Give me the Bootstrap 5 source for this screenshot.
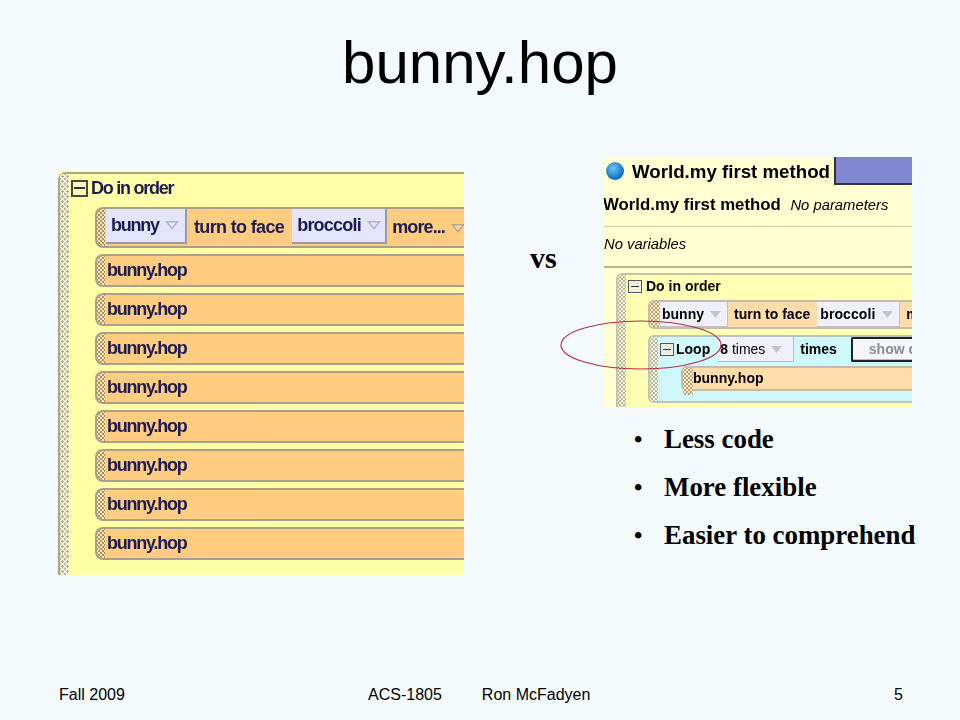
<!DOCTYPE html>
<html lang="en">
<head>
<meta charset="utf-8">
<title>bunny.hop</title>
<link rel="stylesheet" href="https://cdn.jsdelivr.net/npm/bootstrap@5.3.0/dist/css/bootstrap.min.css">
<style>
html,body{margin:0;height:720px;overflow:hidden;background:#f4fafb}
.slide{height:720px;font-family:"Liberation Sans",Arial,sans-serif;color:#000;position:relative}
.slide-title{font-size:60px;line-height:68px;padding-top:29px;height:157px;margin:0;font-weight:400;text-align:center}
.left-pic{width:407px;height:406px;margin:12px 0 0 57px;background:linear-gradient(#fffff0 0,#ffffa8 5px,#ffffa6 100%);overflow:hidden;flex:none;padding:3px 0 0 1px;filter:blur(.45px)}
.outer-block{height:420px;border:2px solid #a8a68c;border-right:0;border-radius:8px 0 0 8px;position:relative;padding:0 0 0 35px}
.dots{background-color:#fffbe0;background-image:radial-gradient(circle,#a8a688 1px,transparent 1.3px),radial-gradient(circle,#a8a688 1px,transparent 1.3px);background-size:5px 5px;background-position:0 0,2.5px 2.5px}
.outer-strip{position:absolute;left:0;top:0;bottom:0;width:9px}
.minus{width:17px;height:17px;border:2px solid #4a4a38;display:flex;align-items:center;justify-content:center;flex:none;background:#f8f8c0}
.minus::before{content:"";width:11px;height:2px;background:#333}
.l-head{height:28px;margin-left:-24px;color:#1c1c50;font-weight:700;font-size:18px;letter-spacing:-1.25px;gap:3px}
.hop-row{margin:0 0 6px 0;height:33px;width:400px;background:#ffcc80;border:2px solid #a8a08c;border-right:0;border-radius:8px 0 0 8px;display:flex;align-items:center;color:#1c1c50;font-weight:700;font-size:18px;letter-spacing:-1.25px;overflow:hidden}
.hop-row.tall{height:41px;margin-top:5px;margin-bottom:6px}
.row-strip{width:8px;align-self:stretch;flex:none;background-color:#ffe4b4;background-image:radial-gradient(circle,#a89060 .8px,transparent 1.1px),radial-gradient(circle,#a89060 .8px,transparent 1.1px);background-size:4px 4px;background-position:0 0,2px 2px;margin:0 2px 0 0}
.pick{background:#e4e4fc;height:35px;align-self:flex-start;display:flex;align-items:center;border-right:2px solid #9a9aa6;border-bottom:2px solid #9a9aa6;padding:0 5px}
.pick-bunny{margin-left:-1px;width:81px}
.pick-broc{margin-left:8px;width:95px;letter-spacing:-.8px}
.face-word{margin-left:7px;letter-spacing:-.65px;white-space:nowrap}
.more-word{margin-left:5px;letter-spacing:-.9px;white-space:nowrap}
.tri{margin-left:6px;flex:none}
.right-col{width:312px;flex:none;position:relative}
.vs-word{font:700 30px/1 "Liberation Serif","Times New Roman",serif;width:74px;margin:86px 0 0 66px;flex:none}
.right-pic{width:308px;height:250px;background:#ffffd2;overflow:hidden;filter:blur(.35px);font-weight:700;position:relative}
.win-head{height:28px}
.ball{width:18px;height:18px;border-radius:50%;background:radial-gradient(circle at 40% 35%,#6cc4f4,#0a6cc0 70%,#064a90);margin:0 8px 0 2px;flex:none}
.win-title{font-size:18.7px;line-height:27px;width:202px;flex:none;white-space:nowrap}
.win-fill{flex:1;background:#7f88d0;border-left:2px solid #333;border-bottom:2px solid #333}
.meth{height:42px;border-bottom:1px solid #c8c8a8;font-size:16.8px;white-space:nowrap;padding-top:7px;text-indent:-1px}
.meth i{font-weight:400;font-size:14.8px;margin-left:5px}
.vars{height:41px;border-bottom:2px solid #b4b48c;font-size:14.8px;font-weight:400;font-style:italic;padding-top:6px}
.r-block{height:160px;margin:5px 0 0 12px;background:#ffffb4;border:2px solid #c4c4a4;border-right:0;border-radius:6px 0 0 6px;position:relative;font-size:14px;padding:1px 0 0 10px;white-space:nowrap}
.r-strip{position:absolute;left:0;top:0;bottom:0;width:8px;background-size:4px 4px;background-position:0 0,2px 2px;background-color:#fffbe0;background-image:radial-gradient(circle,#b4b298 .8px,transparent 1.1px),radial-gradient(circle,#b4b298 .8px,transparent 1.1px)}
.r-minus{width:14px;height:13px;border:1px solid #556;display:flex;align-items:center;justify-content:center;flex:none;background:#eef0e0}
.r-minus::before{content:"";width:8px;height:1px;background:#333}
.r-row{height:29px;width:270px;margin:3px 0 0 20px;background:#ffdca8;border:2px solid #c4bea8;border-right:0;border-radius:6px 0 0 6px;display:flex;overflow:hidden;align-items:flex-start}
.r-grip{width:10px;height:27px;flex:none;background-color:#ffeccc;background-image:radial-gradient(circle,#bca070 .8px,transparent 1.1px),radial-gradient(circle,#bca070 .8px,transparent 1.1px);background-size:4px 4px;background-position:0 0,2px 2px}
.r-pick{background:#f0f0fb;height:25px;display:flex;align-items:center;padding:0 5px 0 2px;border-right:1px solid #c0c0c8;border-bottom:1px solid #c0c0c8;flex:none}
.r-pick-bunny{width:68px}
.r-pick-broc{width:83px;padding-left:3px;letter-spacing:.1px}
.r-pick-eight{width:76px}
.r-word{line-height:25px;padding:0 6px;flex:none}
.face-gap{padding-right:7px}
.loop-block{height:68px;width:270px;margin:6px 0 0 20px;background:#d0f8fb;border:2px solid #bcc4c0;border-right:0;border-radius:6px 0 0 6px;position:relative}
.loop-line{height:25px;margin-left:10px}
.loop-word{margin-left:2px}
.r-btn{width:90px;height:25px;margin-left:8px;flex:none;background:#f6f6fc;border:2px solid #222;border-right:0;color:#8a8a98;line-height:21px;padding-left:16px;border-radius:2px 0 0 2px;box-shadow:inset -1px -1px 0 #bbb}
.loop-hop{height:25px;margin:4px 0 0 31px;background:#ffdca8;border:2px solid #c4bea8;border-right:0;border-radius:6px 0 0 6px;display:flex;line-height:20px}
.bullets{font:700 26.9px/48px "Liberation Serif","Times New Roman",serif;margin:8px -10px 0 30px;padding:0;list-style:none;white-space:nowrap;letter-spacing:0}
.bullets li{display:flex}
.bullets li::before{content:"•";width:30px;flex:none;font-size:24px}
.oval{position:absolute;left:-44px;top:163px;overflow:visible}
.foot{position:absolute;left:59px;right:57px;bottom:15px;font-size:16px;line-height:20px}
.foot-mid{position:absolute;left:309px;white-space:nowrap;display:flex;gap:40px}
</style>
</head>
<body>
<div class="slide">
  <h1 class="slide-title">bunny.hop</h1>
  <div class="d-flex align-items-start">
    <div class="left-pic">
      <div class="outer-block">
        <div class="outer-strip dots"></div>
        <div class="l-head d-flex align-items-center"><span class="minus"></span><span>Do in order</span></div>
        <div class="hop-row tall"><span class="row-strip"></span><span class="pick pick-bunny">bunny<svg class="tri" width="14" height="9" viewBox="0 0 14 9"><polygon points="0,0 14,0 7,9" fill="#b4b4c4"/><polygon points="3,1.5 11,1.5 7,6.5" fill="#e4e4fc"/></svg></span><span class="face-word">turn to face</span><span class="pick pick-broc">broccoli<svg class="tri" width="14" height="9" viewBox="0 0 14 9"><polygon points="0,0 14,0 7,9" fill="#b4b4c4"/><polygon points="3,1.5 11,1.5 7,6.5" fill="#e4e4fc"/></svg></span><span class="more-word">more...<svg class="tri" width="14" height="9" viewBox="0 0 14 9"><polygon points="0,0 14,0 7,9" fill="#b0a890"/><polygon points="3,1.5 11,1.5 7,6.5" fill="#ffd9a0"/></svg></span></div>
        <div class="hop-row"><span class="row-strip"></span>bunny.hop</div>
        <div class="hop-row"><span class="row-strip"></span>bunny.hop</div>
        <div class="hop-row"><span class="row-strip"></span>bunny.hop</div>
        <div class="hop-row"><span class="row-strip"></span>bunny.hop</div>
        <div class="hop-row"><span class="row-strip"></span>bunny.hop</div>
        <div class="hop-row"><span class="row-strip"></span>bunny.hop</div>
        <div class="hop-row"><span class="row-strip"></span>bunny.hop</div>
        <div class="hop-row"><span class="row-strip"></span>bunny.hop</div>
      </div>
    </div>
    <div class="vs-word">vs</div>
    <div class="right-col">
      <div class="right-pic">
        <div class="win-head d-flex align-items-center"><span class="ball"></span><span class="win-title">World.my first method</span><span class="win-fill align-self-stretch"></span></div>
        <div class="meth">World.my first method <i>No parameters</i></div>
        <div class="vars">No variables</div>
        <div class="r-block">
          <div class="r-strip"></div>
          <div class="d-flex align-items-center gap-1"><span class="r-minus"></span><span>Do in order</span></div>
          <div class="r-row"><span class="r-grip"></span><span class="r-pick r-pick-bunny">bunny<svg class="tri" width="11" height="7" viewBox="0 0 11 7"><polygon points="0,0 11,0 5.5,7" fill="#c4c4d0"/></svg></span><span class="r-word face-gap">turn to face</span><span class="r-pick r-pick-broc">broccoli<svg class="tri" width="11" height="7" viewBox="0 0 11 7"><polygon points="0,0 11,0 5.5,7" fill="#c4c4d0"/></svg></span><span class="r-word">m</span></div>
          <div class="loop-block">
            <div class="r-strip"></div>
            <div class="loop-line d-flex align-items-center"><span class="r-minus"></span><span class="loop-word">Loop</span><span class="r-pick r-pick-eight ms-2">8&nbsp;<span class="fw-normal">times</span><svg class="tri" width="11" height="7" viewBox="0 0 11 7"><polygon points="0,0 11,0 5.5,7" fill="#c4c4d0"/></svg></span><span class="r-word">times</span><span class="r-btn">show c</span></div>
            <div class="loop-hop"><span class="r-grip"></span>bunny.hop</div>
          </div>
        </div>
      </div>
      <ul class="bullets">
        <li>Less code</li>
        <li>More flexible</li>
        <li>Easier to comprehend</li>
      </ul>
      <svg class="oval" width="162" height="50" viewBox="0 0 162 50"><ellipse cx="81" cy="25" rx="80" ry="24" fill="none" stroke="#b03048" stroke-width="1.2"/></svg>
    </div>
  </div>
  <div class="foot d-flex justify-content-between"><span>Fall 2009</span><span class="foot-mid"><span>ACS-1805</span><span>Ron McFadyen</span></span><span>5</span></div>
</div>
<script src="https://cdn.jsdelivr.net/npm/bootstrap@5.3.0/dist/js/bootstrap.bundle.min.js"></script>
</body>
</html>
